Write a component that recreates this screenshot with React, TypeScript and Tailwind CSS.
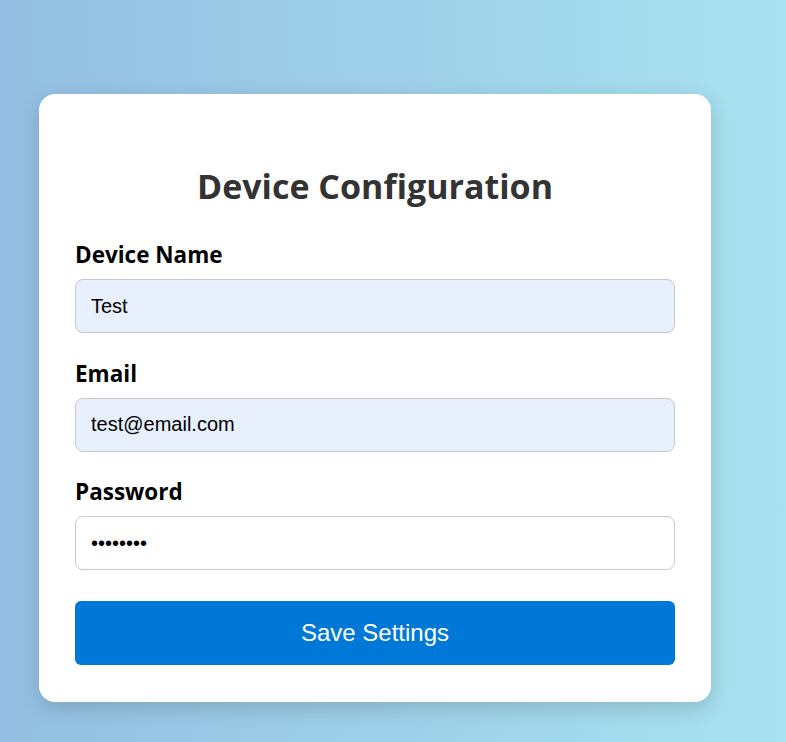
export default function App() {
  const fields = [
    { label: 'Device Name', type: 'text', value: 'Test', filled: true },
    { label: 'Email', type: 'email', value: 'test@email.com', filled: true },
    { label: 'Password', type: 'password', value: '12345678', filled: false },
  ]

  return (
    <div className="min-h-screen w-full bg-[linear-gradient(to_right,#94bfe2,#a8e2f0)] pt-[94px] pl-[39px]">
      <div className="w-[672px] rounded-[16px] bg-white px-[36px] pt-[36px] pb-[37px] shadow-[0_6px_22px_rgba(0,0,0,0.16)] font-['Open_Sans','Noto_Sans',sans-serif]">
        <h2 className="mt-[33px] mb-[31px] text-center text-[34px] leading-[46px] font-bold text-[#333]">
          Device Configuration
        </h2>
        {fields.map(f => (
          <div key={f.label} className="mb-[25.5px]">
            <label className="mb-[9px] block text-[22.5px] leading-[30px] font-bold text-black">{f.label}</label>
            <input
              type={f.type}
              defaultValue={f.value}
              readOnly
              className={`h-[54px] w-full rounded-[8px] border border-[#c8c8c8] px-[15px] text-[20px] text-black outline-none font-['Liberation_Sans',Arial,sans-serif] ${f.filled ? 'bg-[#e8f0fe]' : 'bg-white'}`}
            />
          </div>
        ))}
        <button className="mt-[5px] h-[64px] w-full rounded-[6px] bg-[#0078d7] text-[24px] text-white font-['Liberation_Sans',Arial,sans-serif]">
          Save Settings
        </button>
      </div>
    </div>
  )
}
